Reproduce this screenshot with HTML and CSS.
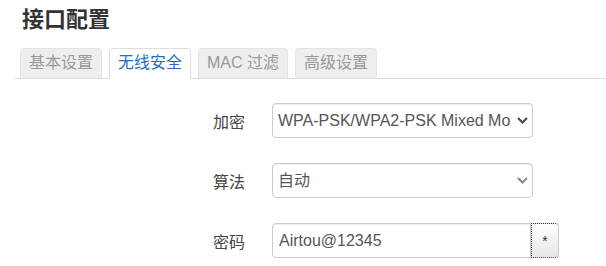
FILE: index.html
```html
<!DOCTYPE html>
<html lang="zh">
<head>
    <meta charset="UTF-8">
    <meta name="viewport" content="width=device-width, initial-scale=1.0">
    <title>接口配置</title>
    <link rel="stylesheet" href="styles.css">
</head>
<body>
    <div class="page">
        <h2 class="page-title">接口配置</h2>

        <ul class="tabs">
            <li class="tab">基本设置</li>
            <li class="tab active">无线安全</li>
            <li class="tab">MAC 过滤</li>
            <li class="tab">高级设置</li>
        </ul>

        <div class="form">
            <div class="form-row">
                <label class="form-label">加密</label>
                <div class="select-wrap">
                    <select class="form-control select">
                        <option>WPA-PSK/WPA2-PSK Mixed Mode</option>
                    </select>
                    <svg class="chevron dark" width="11" height="7" viewBox="0 0 11 7">
                        <path d="M1 1 L5.5 5.5 L10 1" fill="none" stroke="currentColor" stroke-width="2"/>
                    </svg>
                </div>
            </div>

            <div class="form-row">
                <label class="form-label">算法</label>
                <div class="select-wrap">
                    <select class="form-control select">
                        <option>自动</option>
                    </select>
                    <svg class="chevron" width="11" height="7" viewBox="0 0 11 7">
                        <path d="M1 1 L5.5 5.5 L10 1" fill="none" stroke="currentColor" stroke-width="2"/>
                    </svg>
                </div>
            </div>

            <div class="form-row">
                <label class="form-label">密码</label>
                <div class="input-group">
                    <input class="form-control password" type="text" value="Airtou@12345">
                    <button class="reveal-button">*</button>
                </div>
            </div>
        </div>
    </div>
</body>
</html>
```

FILE: styles.css
```css
body {
    margin: 0;
    padding: 0;
    background: #fff;
    font-family: "Liberation Sans", "Noto Sans CJK SC", sans-serif;
    color: #333;
    overflow: hidden;
}

.page {
    padding: 6px 0 0 14px;
}

.page-title {
    margin: 0 0 0 8px;
    font-size: 22px;
    line-height: 28px;
    font-weight: bold;
    color: #333;
}

.tabs {
    list-style: none;
    margin: 14px 0 0 0;
    padding: 0 0 0 6px;
    display: flex;
    border-bottom: 1px solid #ddd;
    height: 30px;
}

.tab {
    box-sizing: border-box;
    height: 30px;
    padding: 0 8px;
    margin-right: 7px;
    font-size: 16px;
    line-height: 28px;
    color: #999;
    background: #eee;
    border: 1px solid #e4e4e4;
    border-bottom: none;
    border-radius: 4px 4px 0 0;
}

.tab.active {
    height: 31px;
    color: #2a6ebb;
    background: #fff;
    border-color: #ddd;
}

.form {
    padding-top: 24px;
}

.form-row {
    display: flex;
    align-items: center;
    height: 35px;
    margin-bottom: 25px;
}

.form-row:last-child {
    margin-bottom: 0;
}

.form-label {
    width: 231px;
    margin-right: 27px;
    text-align: right;
    font-size: 16px;
    color: #444;
}

.form-control {
    box-sizing: border-box;
    height: 35px;
    border: 1px solid #ccc;
    border-radius: 4px;
    box-shadow: inset 0 1px 1px rgba(0, 0, 0, 0.075);
    background: #fff;
    font-family: "Liberation Sans", "Noto Sans CJK SC", sans-serif;
    font-size: 16px;
    color: #555;
    outline: none;
}

.select-wrap {
    position: relative;
    width: 261px;
}

.select {
    width: 100%;
    padding: 0 21px 0 5px;
    appearance: none;
    -webkit-appearance: none;
}

.chevron {
    position: absolute;
    right: 5px;
    top: 14px;
    color: #888;
}

.chevron.dark {
    color: #444;
}

.input-group {
    display: flex;
}

.password {
    width: 259px;
    padding: 0 6px;
    border-radius: 4px 0 0 4px;
}

.reveal-button {
    box-sizing: border-box;
    width: 28px;
    height: 35px;
    padding: 0;
    border: 1px dotted #333;
    border-right: 1px solid #ccc;
    border-radius: 0 4px 4px 0;
    background: linear-gradient(#fff, #e6e6e6);
    font-family: "Liberation Sans", sans-serif;
    font-size: 14px;
    color: #333;
}
```
